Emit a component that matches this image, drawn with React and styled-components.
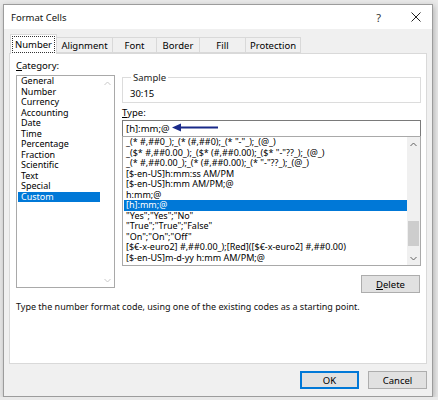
import React from "react";
import styled, { createGlobalStyle } from "styled-components";

const categories = [
  "General",
  "Number",
  "Currency",
  "Accounting",
  "Date",
  "Time",
  "Percentage",
  "Fraction",
  "Scientific",
  "Text",
  "Special",
  "Custom",
];

const formats = [
  '_(* #,##0_);_(* (#,##0);_(* "-"_);_(@_)',
  '_($* #,##0.00_);_($* (#,##0.00);_($* "-"??_);_(@_)',
  '_(* #,##0.00_);_(* (#,##0.00);_(* "-"??_);_(@_)',
  "[$-en-US]h:mm:ss AM/PM",
  "[$-en-US]h:mm AM/PM;@",
  "h:mm;@",
  "[h]:mm;@",
  '"Yes";"Yes";"No"',
  '"True";"True";"False"',
  '"On";"On";"Off"',
  "[$€-x-euro2] #,##0.00_);[Red]([$€-x-euro2] #,##0.00)",
  "[$-en-US]m-d-yy h:mm AM/PM;@",
];

const tabs = ["Number", "Alignment", "Font", "Border", "Fill", "Protection"];
const tabWidths = [47, 57, 45, 44, 47, 56];

const Chevron = ({ down, faded }) => (
  <svg width="7" height="5" viewBox="0 0 7 5">
    <polyline
      points={down ? "0.5,1 3.5,4 6.5,1" : "0.5,4 3.5,1 6.5,4"}
      fill="none"
      stroke={faded ? "#c8c8c8" : "#606060"}
      strokeWidth="1"
    />
  </svg>
);

export default function App() {
  return (
    <>
      <GlobalStyle />
      <Window>
        <TitleBar>
          <Title>Format Cells</Title>
          <TitleButtons>
            <HelpGlyph>?</HelpGlyph>
            <svg width="10" height="10" viewBox="0 0 10 10">
              <path d="M0.5 0.5 L9.5 9.5 M9.5 0.5 L0.5 9.5" stroke="#222" strokeWidth="1" />
            </svg>
          </TitleButtons>
        </TitleBar>
        <Body>
          <TabStrip>
            {tabs.map((t, i) => (
              <Tab key={t} $active={i === 0} $w={tabWidths[i]}>
                {i === 0 ? <Focus>{t}</Focus> : t}
              </Tab>
            ))}
          </TabStrip>
          <Panel>
            <Columns>
              <LeftCol>
                <Label>
                  <u>C</u>ategory:
                </Label>
                <CategoryBox>
                  <Rows>
                    {categories.map((c) => (
                      <Row key={c} $selected={c === "Custom"} $indent={3}>
                        {c}
                      </Row>
                    ))}
                  </Rows>
                  <ScrollBar $plain>
                    <ArrowCell>
                      <Chevron faded />
                    </ArrowCell>
                    <Track />
                    <ArrowCell>
                      <Chevron down faded />
                    </ArrowCell>
                  </ScrollBar>
                </CategoryBox>
              </LeftCol>
              <RightCol>
                <GroupBox>
                  <Legend>Sample</Legend>
                  <SampleValue>30:15</SampleValue>
                </GroupBox>
                <TypeLabel>
                  <u>T</u>ype:
                </TypeLabel>
                <InputWrap>
                  <TextInput>[h]:mm;@</TextInput>
                  <Pointer width="46" height="9" viewBox="0 0 46 9">
                    <path d="M0 4.5 L9 0.5 L9 8.5 Z" fill="#1a2a8a" />
                    <rect x="8" y="3.5" width="38" height="2" fill="#1a2a8a" />
                  </Pointer>
                </InputWrap>
                <FormatBox>
                  <Rows>
                    {formats.map((f) => (
                      <Row key={f} $selected={f === "[h]:mm;@"} $indent={2}>
                        {f}
                      </Row>
                    ))}
                  </Rows>
                  <ScrollBar>
                    <ArrowCell>
                      <Chevron />
                    </ArrowCell>
                    <Track>
                      <Thumb />
                    </Track>
                    <ArrowCell>
                      <Chevron down />
                    </ArrowCell>
                  </ScrollBar>
                </FormatBox>
                <ButtonRow>
                  <Button>
                    <u>D</u>elete
                  </Button>
                </ButtonRow>
              </RightCol>
            </Columns>
            <Hint>
              Type the number format code, using one of the existing codes as a
              starting point.
            </Hint>
          </Panel>
          <Footer>
            <Button $default>OK</Button>
            <Button>Cancel</Button>
          </Footer>
        </Body>
      </Window>
    </>
  );
}

const GlobalStyle = createGlobalStyle`
  html, body {
    margin: 0;
    padding: 0;
    background: #e9e9e9;
  }
  body {
    font-family: "Noto Sans", "Open Sans", sans-serif;
    font-size: 9px;
    color: #000;
  }
`;

const Window = styled.div`
  margin: 4px 0 0 3px;
  width: 428px;
  height: 391px;
  border: 1px solid #9c9c9c;
  background: #f0f0f0;
  box-shadow: 1px 2px 6px rgba(0, 0, 0, 0.25);
  display: flex;
  flex-direction: column;
`;

const TitleBar = styled.div`
  height: 24px;
  background: #fff;
  display: flex;
  align-items: center;
  justify-content: space-between;
  padding: 0 11px 0 7px;
`;

const Title = styled.div`
  font-size: 9.5px;
  color: #111;
`;

const TitleButtons = styled.div`
  display: flex;
  align-items: center;
  gap: 30px;
`;

const HelpGlyph = styled.span`
  font-size: 11px;
  color: #333;
`;

const Body = styled.div`
  flex: 1;
  display: flex;
  flex-direction: column;
  padding: 5px 5px 0 5px;
`;

const TabStrip = styled.div`
  display: flex;
  align-items: flex-end;
  height: 19px;
  padding-left: 1px;
  position: relative;
  z-index: 1;
`;

const Tab = styled.div`
  width: ${(p) => p.$w}px;
  height: ${(p) => (p.$active ? 20 : 16)}px;
  margin-bottom: ${(p) => (p.$active ? -1 : 0)}px;
  margin-left: ${(p) => (p.$active ? 0 : -1)}px;
  box-sizing: border-box;
  border: 1px solid #d9d9d9;
  border-bottom: ${(p) => (p.$active ? "none" : "1px solid #d9d9d9")};
  background: ${(p) => (p.$active ? "#fff" : "#f0f0f0")};
  display: flex;
  align-items: center;
  justify-content: center;
  font-size: 9.5px;
  color: #000;
  padding-bottom: ${(p) => (p.$active ? 1 : 0)}px;
`;

const Focus = styled.span`
  outline: 1px dotted #333;
  outline-offset: 1px;
  padding: 0 1px;
`;

const Panel = styled.div`
  height: 311px;
  box-sizing: border-box;
  background: #fff;
  border: 1px solid #d9d9d9;
  padding: 6px 5px 0 6px;
  display: flex;
  flex-direction: column;
`;

const Columns = styled.div`
  display: grid;
  grid-template-columns: 99px 299px;
  column-gap: 7px;
  align-items: start;
`;

const LeftCol = styled.div`
  display: flex;
  flex-direction: column;
`;

const RightCol = styled.div`
  display: flex;
  flex-direction: column;
`;

const Label = styled.div`
  height: 11px;
  line-height: 11px;
  font-size: 9.5px;
  margin-bottom: 4px;
`;

const ListFrame = styled.div`
  box-sizing: border-box;
  border: 1px solid #a9a9a9;
  background: #fff;
  display: flex;
`;

const CategoryBox = styled(ListFrame)`
  height: 213px;
`;

const FormatBox = styled(ListFrame)`
  height: 130px;
`;

const Rows = styled.div`
  flex: 1;
  min-width: 0;
  overflow: hidden;
`;

const Row = styled.div`
  height: 10.5px;
  line-height: 10.5px;
  font-size: 9px;
  white-space: nowrap;
  padding-left: ${(p) => p.$indent}px;
  margin-left: 1px;
  background: ${(p) => (p.$selected ? "#0078d7" : "transparent")};
  color: ${(p) => (p.$selected ? "#fff" : "#000")};
`;

const ScrollBar = styled.div`
  width: ${(p) => (p.$plain ? 14 : 13)}px;
  flex: none;
  display: flex;
  flex-direction: column;
  background: ${(p) => (p.$plain ? "#fff" : "#f0f0f0")};
`;

const ArrowCell = styled.div`
  height: 14px;
  display: flex;
  align-items: center;
  justify-content: center;
`;

const Track = styled.div`
  flex: 1;
  display: flex;
  flex-direction: column;
  padding: 0 1px;
`;

const Thumb = styled.div`
  margin-top: 70px;
  height: 25px;
  background: #cdcdcd;
`;

const GroupBox = styled.fieldset`
  margin: 12px 0 0 0;
  padding: 5px 7px 3px 7px;
  border: 1px solid #dcdcdc;
  min-width: 0;
`;

const Legend = styled.legend`
  font-size: 9.5px;
  line-height: 11px;
  padding: 0 2px;
  margin-left: 1px;
  color: #222;
`;

const SampleValue = styled.div`
  height: 11px;
  line-height: 11px;
  font-size: 9.5px;
`;

const TypeLabel = styled(Label)`
  margin: 4px 0 2px 0;
`;

const InputWrap = styled.div`
  position: relative;
`;

const TextInput = styled.div`
  height: 16px;
  box-sizing: border-box;
  border: 1px solid #7a7a7a;
  border-bottom: none;
  padding-left: 3px;
  line-height: 15px;
  font-size: 9.5px;
`;

const Pointer = styled.svg`
  position: absolute;
  left: 50px;
  top: 3px;
`;

const ButtonRow = styled.div`
  display: flex;
  justify-content: flex-end;
  margin: 9px 1px 0 0;
`;

const Button = styled.div`
  width: 59px;
  height: 18px;
  box-sizing: border-box;
  background: #e1e1e1;
  border: ${(p) => (p.$default ? "2px solid #0078d7" : "1px solid #adadad")};
  display: flex;
  align-items: center;
  justify-content: center;
  font-size: 9.5px;
  color: #000;
`;

const Hint = styled.div`
  margin-top: 8px;
  font-size: 9px;
  line-height: 11px;
  color: #111;
`;

const Footer = styled.div`
  display: flex;
  justify-content: flex-end;
  gap: 9px;
  padding: 7px 0 0 0;
`;
